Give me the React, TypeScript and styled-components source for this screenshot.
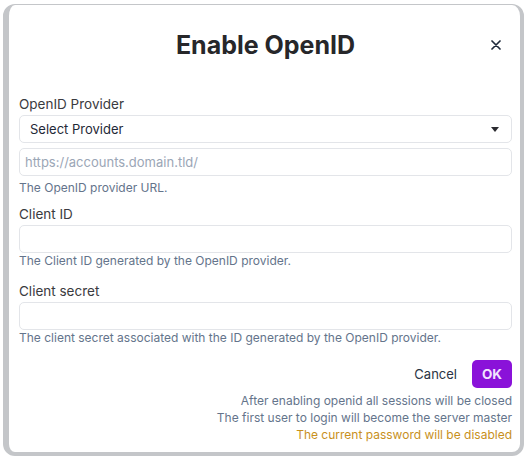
import React from "react";
import styled, { createGlobalStyle } from "styled-components";

const Global = createGlobalStyle`
  html, body { margin: 0; padding: 0; background: #ffffff; }
  body { font-family: Inter, "Noto Sans", "Liberation Sans", sans-serif; }
  * { box-sizing: border-box; }
`;

const Dialog = styled.div`
  margin: 4px 0 0 3px;
  width: 521px;
  background: #ffffff;
  border-style: solid;
  border-color: #c4c6c9;
  border-width: 1px 4px 4px 6px;
  border-radius: 12px;
  padding: 24px 8px 9px 10px;
  display: flex;
  flex-direction: column;
`;

const Header = styled.div`
  display: grid;
  grid-template-columns: 1fr auto 1fr;
  align-items: center;
  height: 32px;
`;

const Title = styled.h1`
  grid-column: 2;
  margin: 0;
  font-size: 25px;
  line-height: 32px;
  font-weight: 700;
  color: #27272a;
`;

const CloseButton = styled.button`
  grid-column: 3;
  justify-self: end;
  width: 32px;
  height: 32px;
  border: none;
  background: transparent;
  padding: 0;
  display: flex;
  align-items: center;
  justify-content: center;
  color: #1e293b;
  cursor: pointer;
`;

const Label = styled.label<{ $mt: number }>`
  display: block;
  margin-top: ${(p) => p.$mt}px;
  margin-bottom: 1px;
  font-size: 13.5px;
  line-height: 20px;
  color: #3a3a40;
`;

const Box = styled.div<{ $mt?: number; $pl?: number }>`
  height: 28px;
  margin-top: ${(p) => p.$mt ?? 0}px;
  border: 1px solid #e3e5e9;
  border-radius: 5px;
  display: flex;
  align-items: center;
  padding: 0 10px 0 ${(p) => p.$pl ?? 10}px;
  font-size: 13px;
  color: #1f2937;
  background: #ffffff;
`;

const Value = styled.span`
  flex: 1;
`;

const Placeholder = styled.span`
  flex: 1;
  color: #9ba6b6;
`;

const Helper = styled.div<{ $mt: number }>`
  margin-top: ${(p) => p.$mt}px;
  font-size: 12px;
  line-height: 16px;
  color: #64748b;
`;

const Footer = styled.div`
  margin-top: 14px;
  display: flex;
  justify-content: flex-end;
  align-items: center;
  gap: 15px;
`;

const CancelButton = styled.button`
  height: 28px;
  border: none;
  background: transparent;
  padding: 0;
  font-family: inherit;
  font-size: 13px;
  color: #2a3444;
  cursor: pointer;
`;

const OkButton = styled.button`
  width: 40px;
  height: 28px;
  border: none;
  border-radius: 5px;
  background: #8a12d9;
  color: #f1e4ff;
  font-family: inherit;
  font-size: 13.5px;
  font-weight: 700;
  padding: 0;
  cursor: pointer;
`;

const Notes = styled.div`
  margin-top: 4px;
  display: flex;
  flex-direction: column;
  align-items: flex-end;
  font-size: 12px;
  line-height: 17px;
`;

const Note = styled.div<{ $warn?: boolean }>`
  color: ${(p) => (p.$warn ? "#c8901c" : "#64748b")};
`;

export default function App() {
  return (
    <>
      <Global />
      <Dialog>
        <Header>
          <Title>Enable OpenID</Title>
          <CloseButton aria-label="Close">
            <svg width="10" height="10" viewBox="0 0 10 10">
              <path d="M1 1 L9 9 M9 1 L1 9" stroke="currentColor" strokeWidth="1.7" strokeLinecap="round" />
            </svg>
          </CloseButton>
        </Header>

        <Label $mt={33}>OpenID Provider</Label>
        <Box $pl={10}>
          <Value>Select Provider</Value>
          <svg width="8" height="5" viewBox="0 0 8 5" style={{ marginRight: 2 }}>
            <path d="M0 0 H8 L4 5 Z" fill="#2b2b30" />
          </svg>
        </Box>
        <Box $mt={5} $pl={5}>
          <Placeholder>https://accounts.domain.tld/</Placeholder>
        </Box>
        <Helper $mt={4}>The OpenID provider URL.</Helper>

        <Label $mt={8}>Client ID</Label>
        <Box />
        <Helper $mt={0}>The Client ID generated by the OpenID provider.</Helper>

        <Label $mt={12}>Client secret</Label>
        <Box />
        <Helper $mt={0}>The client secret associated with the ID generated by the OpenID provider.</Helper>

        <Footer>
          <CancelButton>Cancel</CancelButton>
          <OkButton>OK</OkButton>
        </Footer>

        <Notes>
          <Note>After enabling openid all sessions will be closed</Note>
          <Note>The first user to login will become the server master</Note>
          <Note $warn>The current password will be disabled</Note>
        </Notes>
      </Dialog>
    </>
  );
}
